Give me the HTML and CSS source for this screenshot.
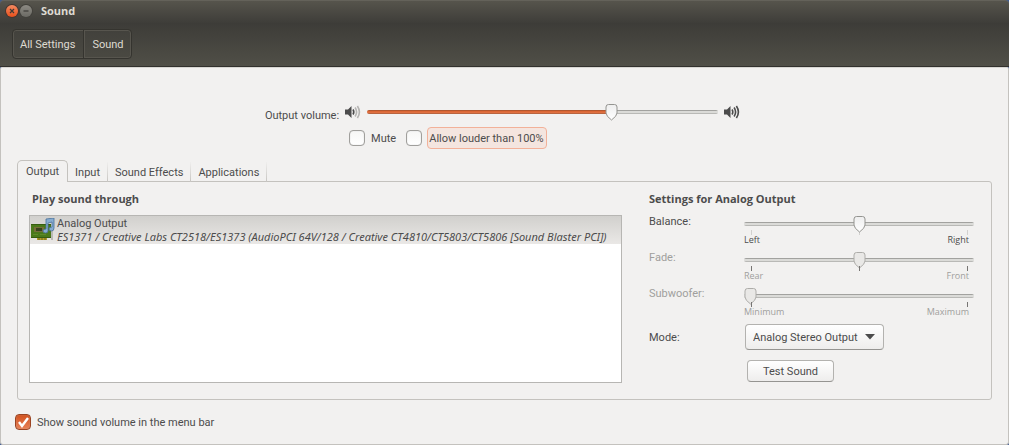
FILE: index.html
```html
<!DOCTYPE html>
<html lang="en">
<head>
<meta charset="utf-8">
<title>Sound</title>
<link rel="stylesheet" href="styles.css">
</head>
<body>
<div class="window">
  <header class="titlebar">
    <button class="wm wm-close" aria-label="Close"><svg viewBox="0 0 12 12"><path d="M4 4l4 4M8 4l-4 4"/></svg></button>
    <button class="wm wm-min" aria-label="Minimize"><svg viewBox="0 0 12 12"><path d="M3.5 6h5"/></svg></button>
    <h1 class="title">Sound</h1>
  </header>
  <nav class="toolbar" aria-label="Location">
    <div class="crumbs"><button class="crumb">All Settings</button><button class="crumb crumb-last">Sound</button></div>
  </nav>
  <main class="content">
    <section class="volume">
      <label class="volume-label" for="volume">Output volume:</label>
      <div class="volume-row">
        <svg class="speaker" viewBox="0 0 16 14" aria-hidden="true"><path class="on" d="M0 4.500h3l3.500-3.500v12l-3.500-3.500H0z"/><path class="wave" d="M8 4.500q1.600 2.500 0 5"/><path class="wave dim" d="M10.100 2.500q3 4.500 0 9M12.400 1q4 6 0 12"/></svg>
        <input class="range range-volume" id="volume" type="range" min="0" max="1000" value="705">
        <svg class="speaker" viewBox="0 0 16 14" aria-hidden="true"><path class="on" d="M0 4.500h3l3.500-3.500v12l-3.500-3.500H0z"/><path class="wave" d="M8 4.500q1.600 2.500 0 5M10.100 2.500q3 4.500 0 9M12.400 1q4 6 0 12"/></svg>
      </div>
      <div class="volume-options">
        <label class="check"><input type="checkbox"><span>Mute</span></label>
        <label class="check"><input type="checkbox"><span class="focused">Allow louder than 100%</span></label>
      </div>
    </section>

    <div class="tabs" role="tablist">
      <button class="tab tab-active" role="tab" aria-selected="true">Output</button>
      <button class="tab" role="tab">Input</button>
      <button class="tab" role="tab">Sound Effects</button>
      <button class="tab" role="tab">Applications</button>
    </div>
    <div class="panel" role="tabpanel">
      <section class="devices">
        <h2 class="heading">Play sound through</h2>
        <ul class="device-list">
          <li class="device">
            <svg class="card-icon" viewBox="0 0 24 24" aria-hidden="true">
              <path d="M20 9l2 1v12h-2z" fill="#b9bab5"/>
              <path d="M0 6h20v14H0z" fill="#4b7a1b"/>
              <path d="M0 6h20v1H0zM0 19h20v1H0z" fill="#365d10"/>
              <path d="M3 9h10v5H3z" fill="#766f3a"/><path d="M5 10h6v3H5z" fill="#39431f"/>
              <path d="M2 16.500h5M9 16.500h6" stroke="#5f8a2a"/>
              <path d="M6 20h10v2H6z" fill="#b79b2b"/><path d="M8 20v2M11 20v2M14 20v2" stroke="#6c711e"/>
              <path d="M15 1l8-1v10q0 3-2.500 3t-2.500-2 3-2V4l-4 1v8q0 2-2.500 2T12 13t3-2z" fill="#86acd1" stroke="#48709b" stroke-width=".8"/>
            </svg>
            <div class="device-text">
              <span>Analog Output</span>
              <em>ES1371 / Creative Labs CT2518/ES1373 (AudioPCI 64V/128 / Creative CT4810/CT5803/CT5806 [Sound Blaster PCI])</em>
            </div>
          </li>
        </ul>
      </section>
      <section class="settings">
        <h2 class="heading">Settings for Analog Output</h2>
        <div class="setting">
          <label for="balance">Balance:</label>
          <div class="scale light">
            <input class="range" id="balance" type="range" value="50">
            <div class="ticks"><i></i><i></i><i></i></div>
            <div class="marks"><span>Left</span><span>Right</span></div>
          </div>
        </div>
        <div class="setting off">
          <label for="fade">Fade:</label>
          <div class="scale">
            <input class="range" id="fade" type="range" value="50" disabled>
            <div class="ticks"><i></i><i></i><i></i></div>
            <div class="marks"><span>Rear</span><span>Front</span></div>
          </div>
        </div>
        <div class="setting off">
          <label for="sub">Subwoofer:</label>
          <div class="scale">
            <input class="range" id="sub" type="range" value="0" disabled>
            <div class="ticks"><i></i><i></i></div>
            <div class="marks"><span>Minimum</span><span>Maximum</span></div>
          </div>
        </div>
        <div class="mode">
          <label for="mode">Mode:</label>
          <select class="select" id="mode"><option>Analog Stereo Output</option></select>
          <button class="button">Test Sound</button>
        </div>
      </section>
    </div>
    <label class="check menu-check"><input type="checkbox" checked><span>Show sound volume in the menu bar</span></label>
  </main>
</div>
</body>
</html>
```
FILE: styles.css
```css
* { box-sizing: border-box; }
body {
  margin: 0;
  background: #3d5a92;
  color: #4c4c4c;
  font: 11px/16px Roboto, "Noto Sans", sans-serif;
}
button, input, select { margin: 0; font: inherit; color: inherit; }
h1, h2, ul { margin: 0; padding: 0; font-size: inherit; }
.window { display: flex; flex-direction: column; min-height: 100vh; }
.titlebar {
  display: flex; align-items: center; gap: 2px;
  height: 23px; padding: 0 6px 2px;
  border-top: 1px solid #64625a;
  border-radius: 4px 4px 0 0;
  background: linear-gradient(#56544c, #3e3d39);
}
.wm { width: 12px; height: 12px; padding: 0; border: 0; border-radius: 50%; display: block; }
.wm svg { display: block; width: 12px; height: 12px; fill: none; stroke: #3c3b37; stroke-width: 1.2; }
.wm-close { background: linear-gradient(#f58a61, #e8501b); box-shadow: 0 0 0 1px #46352f; }
.wm-min { background: linear-gradient(#8c8a83, #6b6a64); box-shadow: 0 0 0 1px #42413c; }
.title { margin-left: 7px; color: #dfdbd2; font-family: "Open Sans", sans-serif; font-weight: 700; }
.toolbar {
  padding: 6px 12px 7px;
  border-bottom: 1px solid #32312d;
  background: linear-gradient(#3d3c38, #504f47);
}
.crumbs {
  display: inline-flex; vertical-align: top; height: 30px;
  border: 1px solid #35342f; border-radius: 4px;
  background: linear-gradient(#42413c, #4a4942);
  box-shadow: inset 0 0 0 1px #57554e;
}
.crumb { padding: 2px 8px 0 7px; border: 0; background: none; color: #dfdbd2; }
.crumb-last { padding: 2px 7px 0 8px; border-left: 1px solid #35342f; box-shadow: inset 1px 0 #57554e; }
.content {
  flex: 1;
  padding: 34px 16px 12px 14px;
  border: 1px solid #c4c2be;
  border-top-color: #d8d6d2;
  border-radius: 2px 2px 3px 3px;
  background: #f2f1f0;
}
.volume {
  display: grid; grid-template-columns: auto auto; justify-content: center;
  column-gap: 6px; row-gap: 5px; padding-right: 2px;
}
.volume-label { align-self: end; line-height: 12px; }
.volume-row { display: flex; align-items: center; gap: 6px; height: 20px; }
.speaker { width: 16px; height: 14px; }
.on { fill: #4c4c4c; }
.wave { fill: none; stroke: #4c4c4c; stroke-width: 1.6; }
.dim { stroke: #b5b4b2; }
.volume-options { grid-column: 2; display: flex; gap: 10px; padding-left: 4px; }
.check { display: flex; align-items: center; gap: 6px; }
.check span { padding-top: 2px; }
.check input {
  appearance: none; width: 16px; height: 16px;
  border: 1px solid #a09f9c; border-radius: 4px;
  background: linear-gradient(#f6f6f5, #fff);
  box-shadow: inset 0 0 1px #bbb;
}
.check input:checked {
  border-color: #9b4422;
  background: url("data:image/svg+xml,%3Csvg xmlns='http://www.w3.org/2000/svg' viewBox='0 0 14 14'%3E%3Cpath d='M3 7l3 4 6-8' fill='none' stroke='white' stroke-width='2.400'/%3E%3C/svg%3E"), linear-gradient(#d2521f, #e88258);
}
.volume-options .check { height: 22px; }
.volume-options .check + .check { gap: 5px; }
.check .focused { padding: 3px 2px 1px 1px; border: 1px solid #f2b199; border-radius: 4px; background: #f4e5df; }
.range { display: block; appearance: none; width: 100%; height: 18px; background: none; }
.range::-webkit-slider-runnable-track {
  height: 4px; border-radius: 2px;
  background: linear-gradient(#a2a29f 1px, #dbdbd8 1px, #dbdbd8 3px, #b9b9b6 3px);
}
.range::-webkit-slider-thumb {
  appearance: none; width: 13px; height: 17px; margin-top: -6px;
  background: url("data:image/svg+xml,%3Csvg xmlns='http://www.w3.org/2000/svg' viewBox='0 0 13 17'%3E%3Cdefs%3E%3ClinearGradient id='g' x2='0' y2='1'%3E%3Cstop stop-color='%23eee'/%3E%3Cstop offset='1' stop-color='white'/%3E%3C/linearGradient%3E%3C/defs%3E%3Cpath d='M3.500.5h6q2.500 0 2.500 2.500v6q0 3-5.500 7Q1 12 1 9V3Q1 .5 3.500.5z' fill='url(%23g)' stroke='%23949490'/%3E%3C/svg%3E");
}
.range:disabled::-webkit-slider-thumb {
  background: url("data:image/svg+xml,%3Csvg xmlns='http://www.w3.org/2000/svg' viewBox='0 0 13 17'%3E%3Cpath d='M3.500.5h6q2.500 0 2.500 2.500v6q0 3-5.500 7Q1 12 1 9V3Q1 .5 3.500.5z' fill='%23e9e8e6' stroke='%23adaca9'/%3E%3C/svg%3E");
}
.range-volume { width: 351px; }
.range-volume::-webkit-slider-runnable-track {
  background:
    linear-gradient(#b2572f 1px, #d9632f 1px, #e27446 3px, #b9643f 3px) 0 0 / 70% 100% no-repeat,
    linear-gradient(#a2a29f 1px, #dbdbd8 1px, #dbdbd8 3px, #b9b9b6 3px);
}
.tabs { display: flex; align-items: flex-end; margin: 11px 0 -1px 2px; }
.tab {
  height: 20px; padding: 2px 7px 0; border: 0; border-right: 1px solid;
  border-image: linear-gradient(#f2f1f0, #c4c2be) 1; background: none;
}
.tab-active {
  position: relative; height: 22px; padding: 0 8px;
  border: 1px solid #c4c2be; border-bottom: 0; border-image: none;
  border-radius: 5px 5px 0 0; background: #f2f1f0;
}
.panel {
  display: grid; grid-template-columns: 593px 1fr; column-gap: 27px;
  margin-left: 2px; padding: 9px 17px 16px 11px;
  border: 1px solid #c4c2be; border-radius: 0 3px 3px 3px;
}
.heading { font-family: "Open Sans", sans-serif; font-weight: 700; }
.devices { display: flex; flex-direction: column; gap: 8px; }
.devices .heading { padding-left: 3px; }
.device-list { flex: 1; list-style: none; border: 1px solid #b7b6b3; background: #fff; }
.device {
  display: flex; gap: 2px; height: 28px; padding-left: 1px; align-items: center;
  background: linear-gradient(#d1d0cd, #eae8e6); white-space: nowrap;
}
.card-icon { flex: none; width: 24px; height: 24px; }
.device-text { display: flex; flex-direction: column; line-height: 13px; }
.device-text em { font-family: "Noto Sans", sans-serif; }
.setting { display: grid; grid-template-columns: 95px 1fr; height: 36px; line-height: 18px; }
.setting:first-of-type { margin-top: 6px; }
.scale { padding-top: 2px; }
.light .range { position: relative; }
.off { color: #a09f9d; }
.ticks { display: flex; justify-content: space-between; height: 5px; margin-top: -3px; padding: 0 6px 0 7px; }
.ticks i { width: 1px; background: #777573; }
.light i { background: #d2d1cf; }
.marks { display: flex; justify-content: space-between; padding-right: 5px; font-family: "Open Sans", sans-serif; font-size: 9px; line-height: 10px; }
.mode {
  display: grid; grid-template-columns: 96px auto; justify-content: start; align-items: center;
  row-gap: 10px; padding: 3px 0 1px;
}
.mode label { padding-top: 2px; }
.select, .button {
  border: 1px solid #b3b2af; border-bottom-color: #959491; border-radius: 4px;
  background: linear-gradient(#fff, #eeedec);
}
.select {
  appearance: none; height: 26px; padding: 1px 25px 0 7px;
  background: url("data:image/svg+xml,%3Csvg xmlns='http://www.w3.org/2000/svg' width='10' height='6'%3E%3Cpath d='M0 0h10L5 5.500z' fill='%234c4c4c'/%3E%3C/svg%3E") right 8px center no-repeat, linear-gradient(#fff, #eeedec);
}
.button { grid-column: 2; justify-self: start; width: 87px; height: 22px; margin-left: 2px; padding: 2px 0 0; }
.menu-check { width: max-content; margin-top: 13px; }
```
